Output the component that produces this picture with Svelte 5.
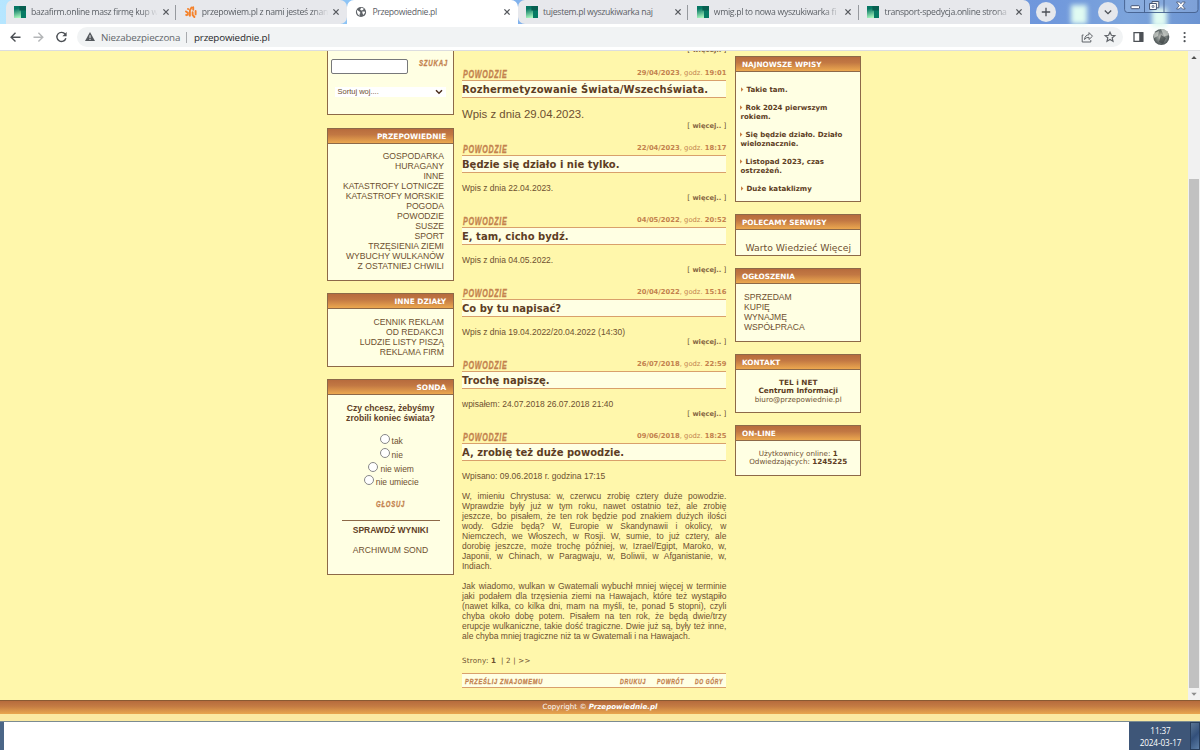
<script>
  const tabs = [
    { title: 'bazafirm.online masz firmę kup w', icon: 'green', fade: true },
    { title: 'przepowiem.pl z nami jesteś znan', icon: 'orange', fade: true },
    { title: 'Przepowiednie.pl', icon: 'globe', active: true },
    { title: 'tujestem.pl wyszukiwarka naj', icon: 'green' },
    { title: 'wmig.pl to nowa wyszukiwarka fi', icon: 'green', fade: true },
    { title: 'transport-spedycja.online strona', icon: 'green', fade: true }
  ];
  const categories = ['GOSPODARKA', 'HURAGANY', 'INNE', 'KATASTROFY LOTNICZE', 'KATASTROFY MORSKIE', 'POGODA', 'POWODZIE', 'SUSZE', 'SPORT', 'TRZĘSIENIA ZIEMI', 'WYBUCHY WULKANÓW', 'Z OSTATNIEJ CHWILI'];
  const sections = ['CENNIK REKLAM', 'OD REDAKCJI', 'LUDZIE LISTY PISZĄ', 'REKLAMA FIRM'];
  const posts = [
    { date: '29/04/2023', time: '19:01', title: 'Rozhermetyzowanie Świata/Wszechświata.', text: 'Wpis z dnia 29.04.2023.', big: true },
    { date: '22/04/2023', time: '18:17', title: 'Będzie się działo i nie tylko.', text: 'Wpis z dnia 22.04.2023.' },
    { date: '04/05/2022', time: '20:52', title: 'E, tam, cicho bydź.', text: 'Wpis z dnia 04.05.2022.' },
    { date: '20/04/2022', time: '15:16', title: 'Co by tu napisać?', text: 'Wpis z dnia 19.04.2022/20.04.2022 (14:30)' },
    { date: '26/07/2018', time: '22:59', title: 'Trochę napiszę.', text: 'wpisałem: 24.07.2018 26.07.2018 21:40' },
    { date: '09/06/2018', time: '18:25', title: 'A, zrobię też duże powodzie.', text: 'Wpisano: 09.06.2018 r. godzina 17:15', last: true }
  ];
  const paragraphs = [
    ['W, imieniu Chrystusa: w, czerwcu zrobię cztery duże powodzie.', 'Wprawdzie były już w tym roku, nawet ostatnio też, ale zrobię', 'jeszcze, bo pisałem, że ten rok będzie pod znakiem dużych ilości', 'wody. Gdzie będą? W, Europie w Skandynawii i okolicy, w', 'Niemczech, we Włoszech, w Rosji. W, sumie, to już cztery, ale', 'dorobię jeszcze, może trochę później, w, Izrael/Egipt, Maroko, w,', 'Japonii, w Chinach, w Paragwaju, w, Boliwii, w Afganistanie, w,', 'Indiach.'],
    ['Jak wiadomo, wulkan w Gwatemali wybuchł mniej więcej w terminie', 'jaki podałem dla trzęsienia ziemi na Hawajach, które też wystąpiło', '(nawet kilka, co kilka dni, mam na myśli, te, ponad 5 stopni), czyli', 'chyba około dobę potem. Pisałem na ten rok, że będą dwie/trzy', 'erupcje wulkaniczne, takie dość tragiczne. Dwie już są, były też inne,', 'ale chyba mniej tragiczne niż ta w Gwatemali i na Hawajach.']
  ];
  const news = [['Takie tam.'], ['Rok 2024 pierwszym', 'rokiem.'], ['Się będzie działo. Działo', 'wieloznacznie.'], ['Listopad 2023, czas', 'ostrzeżeń.'], ['Duże kataklizmy']];
  const answers = ['tak', 'nie', 'nie wiem', 'nie umiecie'];
</script>

{#snippet label(text, width, size = 10)}
  <svg class="label" {width} height="10" viewBox="0 0 {width} 10">
    <text x="0" y="8" font-size={size} textLength={width} lengthAdjust="spacingAndGlyphs">{text}</text>
  </svg>
{/snippet}

<div class="screen">
  <div class="tabbar">
    <div class="glow"></div><div class="glow second"></div>
    <div class="tabs">
      {#each tabs as tab, i}
        <div class="tab" class:active={tab.active} class:first={i === 0} class:before={i === 1} class:after={i === 3} class:last={i === 5} class:sep={i === 0 || i === 3 || i === 4}>
          <svg class="fav" width="12" height="12" viewBox="0 0 12 12">
            {#if tab.icon === 'green'}
              <defs><linearGradient id="leaf{i}" x1="0" y1="0" x2=".25" y2="1"><stop offset=".25" stop-color="#077764" /><stop offset="1" stop-color="#a8f5bd" /></linearGradient></defs>
              <path fill="url(#leaf{i})" d="M0 0H12V12H0z" />
              <path fill="#075f50" d="M5.4 0H12V12H7V4.4H5.4z" />
              <path fill="#059778" d="M7 4.5h5V12H7z" opacity=".5" />
            {:else if tab.icon === 'orange'}
              <g fill="none" stroke="#f5822b" stroke-width="1.9" stroke-linecap="round"><path d="M1 5.4l1.8 1.4v2M4.9 4.2v5.6M4.9 4.2L6.4 1.6M8.2 1.2v2.6M7.6 6.2V9l1.8 2M10.6 5v3.4M1.2 9l.2.2M3 2.9l.2.2" /></g>
            {:else}
              <circle cx="6" cy="6" r="5.1" fill="#5f6368" />
              <path fill="#fff" d="M2 4.1l2.5 1.3 1 1.5-1 1.1.4 1.8C2.8 9.2 1.6 7 2 4.1zM6.2 1.8l2.5.6-.6 1.5-1.8.5-1.2-.9zM7.2 5.6h2.5l.4 1-1.8 2.5-.8-1.8z" />
            {/if}
          </svg>
          <span class="tabtitle" class:fade={tab.fade}>{tab.title}</span>
          <svg class="close" width="8" height="8" viewBox="0 0 8 8"><path d="M1.4 1.4l5.2 5.2M6.6 1.4L1.4 6.6" /></svg>
        </div>
      {/each}
    </div>
    <svg class="round" width="20" height="20" viewBox="0 0 20 20"><circle cx="10" cy="10" r="10" /><path d="M10 5.8v8.4M5.8 10h8.4" /></svg>
    <svg class="round down" width="20" height="20" viewBox="0 0 20 20"><circle cx="10" cy="10" r="10" /><path d="M6.8 8.5L10 11.7l3.2-3.2" /></svg>
    <svg class="controls" width="75" height="14" viewBox="0 0 75 14">
      <path d="M.6 0v9.5q0 3 3 3H71q3 0 3-3V0M20.5 0v12.5M40 0v12.5" fill="#fff" fill-opacity=".12" stroke="#435f8c" stroke-width=".9" />
      <rect x="7" y="5.7" width="8.5" height="3" rx=".7" fill="#fff" stroke="#465675" />
      <path d="M28 1.5h6.8v6.3H28z" fill="#eee" stroke="#465675" /><path d="M25.6 3.5h6.8v6h-6.8z" fill="#fff" stroke="#465675" /><path d="M28 5.7h2v1.6h-2z" fill="#fff" stroke="#465675" stroke-width=".7" />
      <path d="M52.5 2h2.7l1.7 1.7L58.6 2h2.6l-2.7 3.7L61.2 9h-2.7l-1.6-1.7L55.2 9h-2.7l2.7-3.3z" fill="#fff" stroke="#465675" stroke-width=".8" />
    </svg>
  </div>

  <div class="toolbar">
    <svg class="nav" width="77" height="26" viewBox="0 0 77 26" fill="none" stroke="#4b4f54" stroke-width="1.4">
      <path d="M20.5 13.2H11.5M15.5 8.8l-4.4 4.4 4.4 4.4" />
      <path d="M33.5 13.2h9M38.4 8.8l4.4 4.4-4.4 4.4" stroke="#b4b6b8" />
      <path d="M65.2 10.2a4.6 4.6 0 1 0 .7 4.1" /><path d="M66.6 8v4.2h-4.2z" fill="#4b4f54" stroke="none" />
    </svg>
    <div class="address">
      <svg class="warn" width="10" height="10" viewBox="0 0 10 10"><path d="M5 0l5 9H0z" fill="#55595e" /><path d="M5 3.2v2.9M5 6.9V8" stroke="#f1f3f4" /></svg>
      <span class="secure">Niezabezpieczona</span><i></i><span class="url">przepowiednie.pl</span>
      <svg class="share" width="36" height="14" viewBox="0 0 36 14" fill="none" stroke="#5f6368">
        <path d="M2.6 5H1.2v7h8.6v-2" /><path d="M3.5 9.5Q4 5 8 4.7V2.6l3.5 3.6L8 9.5V7.3Q5 7.2 3.5 9.5z" />
        <path d="M29 2.2l1.4 3.1 3.4.3-2.6 2.2.8 3.4-3-1.8-3 1.8.8-3.4-2.6-2.2 3.4-.3z" stroke-width="1.2" />
      </svg>
    </div>
    <svg class="tools" width="77" height="26" viewBox="0 0 77 26">
      <path d="M11 8.7h8.8v8.7H11z" fill="#fff" stroke="#4d5156" stroke-width="1.3" /><path d="M16.2 8.5h4v9h-4z" fill="#4d5156" />
      <defs><radialGradient id="face"><stop offset="0" stop-color="#d2d2cc" /><stop offset=".45" stop-color="#8b918f" /><stop offset="1" stop-color="#4b5354" /></radialGradient></defs>
      <circle cx="38.3" cy="13" r="8" fill="url(#face)" /><path d="M38 5.3q7-.5 8 6l-5 1zM31 9l5-2-1 5-4 2z" fill="#dcded9" opacity=".65" /><path d="M38 11l5 3-3 6-4-2z" fill="#3a4142" opacity=".7" />
      <g fill="#4d5156"><circle cx="61.6" cy="9" r="1.1" /><circle cx="61.6" cy="13.1" r="1.1" /><circle cx="61.6" cy="17.2" r="1.1" /></g>
    </svg>
  </div>

  <div class="viewport">
    <main>
      <aside class="left">
        <section class="box search">
          <div class="searchrow"><input aria-label="Szukaj" /><span>{@render label('SZUKAJ', 29, 8.8)}</span></div>
          <div class="select"><span>Sortuj woj....</span><svg width="8" height="6" viewBox="0 0 8 6"><path d="M1 1.3l3 3 3-3" fill="none" stroke="#4a2d1d" stroke-width="1.5" /></svg></div>
        </section>
        <section class="box cats">
          <h2>PRZEPOWIEDNIE</h2>
          <ul>{#each categories as c}<li>{c}</li>{/each}</ul>
        </section>
        <section class="box other">
          <h2>INNE DZIAŁY</h2>
          <ul>{#each sections as c}<li>{c}</li>{/each}</ul>
        </section>
        <section class="box poll">
          <h2>SONDA</h2>
          <b class="question">Czy chcesz, żebyśmy<br />zrobili koniec świata?</b>
          <div class="answers">{#each answers as a}<div><i></i>{a}</div>{/each}</div>
          <div class="vote">{@render label('GŁOSUJ', 29, 8.6)}</div>
          <hr />
          <b class="results">SPRAWDŹ WYNIKI</b>
          <span class="archive">ARCHIWUM SOND</span>
        </section>
      </aside>

      <div class="center">
        <div class="more top">[ <b>więcej..</b> ]</div>
        {#each posts as p}
          <article class:big={p.big} class:full={p.last}>
            <div class="meta">{@render label('POWODZIE', 44.5)}<span><b>{p.date}</b>, godz. <b>{p.time}</b></span></div>
            <h3>{p.title}</h3>
            <p>{p.text}</p>
            {#if !p.last}<div class="more">[ <b>więcej..</b> ]</div>{/if}
          </article>
        {/each}
        {#each paragraphs as lines}
          <div class="para">{#each lines as line, i}<div class:end={i === lines.length - 1}>{line}</div>{/each}</div>
        {/each}
        <div class="pages">Strony: <b>1</b> &nbsp;| 2 | &gt;&gt;</div>
        <div class="actions">{@render label('PRZEŚLIJ ZNAJOMEMU', 78, 8)}<span></span>{@render label('DRUKUJ', 26, 8)}{@render label('POWRÓT', 27, 8)}{@render label('DO GÓRY', 28, 8)}</div>
      </div>

      <aside class="right">
        <section class="box newest">
          <h2>NAJNOWSZE WPISY</h2>
          {#each news as n, i}<div class="item" class:indent={i === 0 || i === 4}><svg width="3" height="5" viewBox="0 0 3 5"><path d="M0 .3L2.4 2.5 0 4.7z" fill="#c98045" /></svg>{n[0]}{#if n[1]}<br />{n[1]}{/if}</div>{/each}
        </section>
        <section class="box partner"><h2>POLECAMY SERWISY</h2><div>Warto Wiedzieć Więcej</div></section>
        <section class="box ads"><h2>OGŁOSZENIA</h2><ul><li>SPRZEDAM</li><li>KUPIĘ</li><li>WYNAJMĘ</li><li>WSPÓŁPRACA</li></ul></section>
        <section class="box contact"><h2>KONTAKT</h2><div><b>TEL i NET</b><br /><b>Centrum Informacji</b><br />biuro@przepowiednie.pl</div></section>
        <section class="box online"><h2>ON-LINE</h2><div>Użytkownicy online: <b>1</b><br />Odwiedzających: <b>1245225</b></div></section>
      </aside>
    </main>
    <div class="scroll">
      <svg width="12" height="12" viewBox="0 0 12 12"><path d="M3.3 8L6 5l2.7 3z" fill="#505050" /></svg>
      <i></i>
      <svg width="12" height="12" viewBox="0 0 12 12"><path d="M3.3 3.8L6 6.8l2.7-3z" fill="#8d8d8d" /></svg>
    </div>
  </div>
  <footer><span>Copyright © <b>Przepowiednie.pl</b></span></footer>
  <div class="strip"></div>
  <div class="taskbar"><i></i><div class="clock"><span>11:37</span><span>2024-03-17</span></div><div class="peek"></div></div>
</div>

<style>
  :global(body) { margin: 0; overflow: hidden; }
  * { box-sizing: border-box; }
  svg { flex: none; display: block; }
  .screen { width: 1200px; height: 750px; display: flex; flex-direction: column; overflow: hidden; background: #fff; }
  .tabbar { height: 24px; flex: none; display: flex; align-items: center; position: relative; padding-left: 5.5px; background: linear-gradient(90deg, #b6e6ff 0, #8cc3f5 30%, #7ba9e8 50%, #6f97dc 87%, #7ca4dc 94%, #6c94d2); }
  .glow { position: absolute; left: 1071px; top: 5px; width: 16px; height: 19px; background: #e0fbf2; filter: blur(2.5px); }
  .glow.second { left: 1152px; width: 15px; top: 8px; }
  .tabs { display: flex; height: 24px; width: 1024.2px; flex: none; }
  .tab { width: 170.7px; height: 24px; display: flex; align-items: center; padding-left: 8.5px; background: #e7e8ec; font: 8.7px "Open Sans", sans-serif; letter-spacing: -0.31px; color: #5c6066; position: relative; }
  .tab.active { background: #fff; border-radius: 7px 7px 0 0; }
  .tab.first { border-radius: 7px 0 0 0; }
  .tab.before { border-radius: 0 7px 7px 0; }
  .tab.after { border-radius: 7px 0 0 7px; }
  .tab.last { border-radius: 0 7px 0 0; }
  .tab.sep::after { content: ""; position: absolute; right: 0; top: 5px; width: 1px; height: 15px; background: #96999e; }
  .tabtitle { width: 128px; margin-left: 5px; white-space: nowrap; line-height: 14px; }
  .tabtitle.fade { mask-image: linear-gradient(90deg, #000 86%, transparent 99%); }
  .close { margin-left: 2.7px; fill: none; stroke: #54575c; stroke-width: 1.3; }
  .round { margin-left: 6.5px; fill: #e6e8ec; z-index: 1; }
  .round path { fill: none; stroke: #4b4f55; stroke-width: 1.3; }
  .round.down { margin-left: 41.5px; }
  .controls { margin-left: 6.5px; align-self: flex-start; z-index: 1; }
  .toolbar { height: 27px; flex: none; display: flex; background: #fff; border-bottom: 1px solid #dcdde0; }
  .address { width: 1046px; height: 20px; margin-top: 3px; border-radius: 10px; background: #f1f3f4; display: flex; align-items: center; padding-left: 8px; font: 9.8px "Open Sans", sans-serif; letter-spacing: -0.18px; color: #62666b; white-space: nowrap; }
  .secure { width: 80px; margin-left: 6px; }
  .address i { width: 1px; height: 11px; background: #a9abae; margin: 0 7px 0 5px; }
  .url { color: #26282b; flex: 1; }
  .share { margin-right: 6px; }
  .viewport { height: 650px; flex: none; display: flex; background: #fff7ab; overflow: hidden; }
  main { width: 1188px; flex: none; display: flex; padding-left: 327px; font-family: "Liberation Sans", Arial, sans-serif; font-size: 8.5px; line-height: 10px; color: #6e5030; }
  .left { width: 127px; margin-right: 8px; flex: none; }
  .center { width: 264.4px; margin-right: 8.6px; flex: none; }
  .right { width: 126.5px; flex: none; padding-top: 5px; }
  .box { background: #ffffe3; border: 1px solid #8d6948; margin-bottom: 12px; overflow: hidden; }
  h2 { margin: 0; height: 15px; padding: 1px 6px 0; line-height: 14px; font-family: "DejaVu Sans", Verdana, sans-serif; font-weight: bold; font-size: 7.3px; color: #fff; border-bottom: 1px solid #8d6948; background: linear-gradient(#b76b3d, #c27843 40%, #eca84f); white-space: nowrap; }
  .left h2 { text-align: right; font-size: 7.4px; padding-right: 6.8px; }
  ul { margin: 0; padding: 8px 8.5px; list-style: none; }
  .left ul { text-align: right; padding-right: 9px; }
  .cats ul { padding-top: 7.3px; }
  .label { overflow: visible; }
  .label text { font-family: "Liberation Sans Narrow", "Liberation Sans", sans-serif; font-weight: bold; font-style: italic; letter-spacing: 1px; fill: #c3824e; stroke: #c3824e; stroke-width: .3px; }
  .search { height: 64px; border-top: 0; margin-bottom: 13px; }
  .searchrow { display: flex; padding: 8px 0 0 3px; }
  .searchrow span { margin: -1px 0 0 11px; }
  input { width: 77px; height: 15px; padding: 0; border: 1px solid #77787a; border-radius: 2px; background: #fff; }
  .select { height: 10px; width: 111px; margin: 13px 0 0 7px; display: flex; align-items: center; justify-content: space-between; background: #fff; padding: 0 3px 0 2.5px; font-size: 7.5px; }
  .cats { height: 153px; }
  .cats, .other { font-size: 8.65px; }
  .other { height: 74px; }
  .poll { height: 196px; text-align: center; display: flex; flex-direction: column; align-items: center; }
  .poll h2 { width: 100%; flex: none; }
  .question { margin-top: 8px; font-size: 8.6px; color: #5f4127; }
  .answers { margin: 10.3px 0 .7px 1.4px; }
  .answers div { height: 13.7px; display: flex; align-items: flex-start; justify-content: center; line-height: 16px; gap: 2px; }
  .answers i { width: 10px; height: 10px; border: 1px solid #888; border-radius: 50%; background: #fff; margin-top: 1px; }
  .vote { margin-top: 10px; }
  hr { width: 98px; margin: 11px 0 0; border: 0; border-top: 1px solid #8d6948; }
  .results { margin-top: 4px; font-size: 8.5px; color: #5f4127; }
  .archive { margin-top: 10px; font-size: 8.6px; }
  .more { height: 10px; line-height: 10px; text-align: right; font-family: "DejaVu Sans", Verdana, sans-serif; font-size: 7.2px; }
  .more b { color: #876744; font-weight: bold; font-size: 6.7px; }
  .more.top { margin-top: -6px; height: 23px; }
  article { height: 72px; }
  article.big { height: 75px; }
  .meta { height: 12px; display: flex; justify-content: space-between; padding-left: 1px; color: #c3824e; font: 6.8px/10px "DejaVu Sans", Verdana, sans-serif; }
  .meta .label { margin-top: 1.7px; }
  h3 { margin: 0; height: 18px; border: solid #d9a06b; border-width: 1px 0; background: #ffffe3; font: bold 10px/17px "DejaVu Sans", Verdana, sans-serif; color: #5d3d24; white-space: nowrap; }
  .big h3 { letter-spacing: .1px; }
  p { margin: 10px 0 0; height: 10px; }
  .big p { font-size: 11.4px; height: 13px; line-height: 12px; }
  .full { height: 60px; }
  .para { margin-bottom: 10px; white-space: nowrap; }
  .para div { text-align: justify; text-align-last: justify; white-space: normal; height: 10px; }
  .para .end { text-align-last: left; font-size: 8.52px; }
  .pages { margin-top: 14px; height: 18px; font: 7.2px/11px "DejaVu Sans", Verdana, sans-serif; letter-spacing: .17px; }
  .actions { height: 15px; padding: 2.2px 3px 0; border: solid #d9a06b; border-width: 1px 0; background: #ffffe3; display: flex; gap: 11px; }
  .actions span { flex: 1; }
  .right .box { font-family: "DejaVu Sans", Verdana, sans-serif; }
  .newest { height: 146px; font-weight: bold; font-size: 7.05px; line-height: 9px; color: #5d3d24; white-space: nowrap; }
  .item { margin: 0 0 9px 4.5px; }
  h2 + .item { margin-top: 13.4px; }
  .item.indent { padding-left: 1px; }
  .item svg { display: inline-block; margin-right: 2px; }
  .partner { height: 42px; }
  .partner div { text-align: center; font-size: 9.3px; margin-top: 13px; }
  .ads { height: 74px; }
  .ads ul { font-family: "Liberation Sans", Arial, sans-serif; font-size: 8.6px; padding-left: 8px; }
  .contact { height: 59px; }
  .contact div, .online div { text-align: center; font-size: 7.2px; line-height: 8.6px; margin-top: 8.5px; white-space: nowrap; }
  .contact b, .online b { color: #5d3d24; }
  .contact b { font-size: 7.3px; }
  .online { height: 51px; }
  .scroll { width: 12px; flex: none; background: #f1f1f1; display: flex; flex-direction: column; }
  .scroll i { width: 9.5px; height: 509px; margin: 116px 0 1px 1px; background: #c1c1c1; }
  footer { height: 14px; margin-top: -1px; flex: none; border-top: 1px solid #8a5a32; background: linear-gradient(#b66b3d, #c47b43 40%, #e9a74f); color: #fff; text-align: center; font: 7.1px/11px "DejaVu Sans", Verdana, sans-serif; z-index: 1; }
  footer b { font-style: italic; }
  .strip { height: 8px; flex: none; background: #fbeaa3; border-bottom: 1px solid #7b8b91; }
  .taskbar { height: 28px; display: flex; background: #fff; flex: none; }
  .taskbar > i { width: 4px; background: #4b6687; margin-right: auto; }
  .clock { width: 61px; background: #3e5678; color: #fff; display: flex; flex-direction: column; align-items: center; padding: 3px 0 0 2px; font: 8.2px/12px "Open Sans", sans-serif; letter-spacing: -.1px; white-space: nowrap; }
  .peek { width: 10px; background: linear-gradient(135deg, #5a7593, #33507b 50%, #5d7fa8); border: 1px solid #283e5c; }
</style>
